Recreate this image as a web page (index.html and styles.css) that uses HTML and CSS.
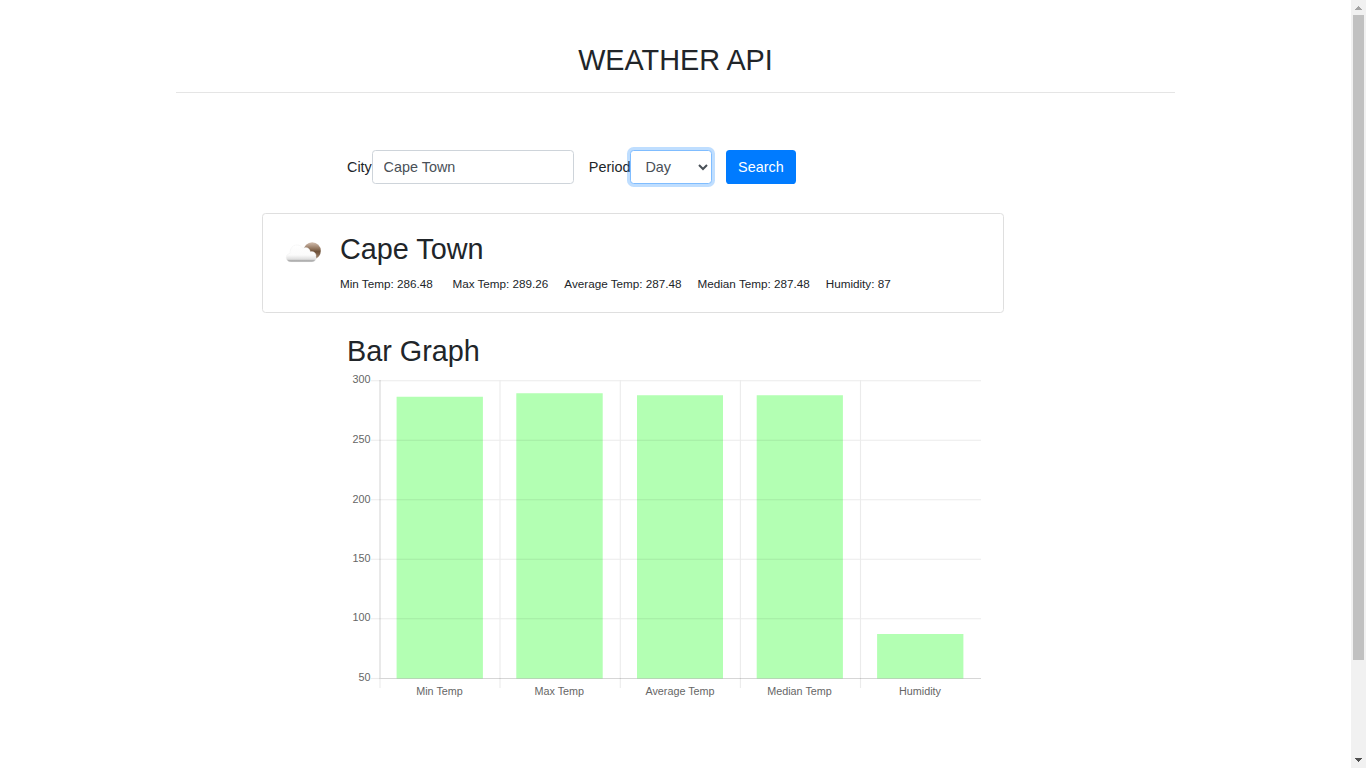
FILE: index.html
```html
<!DOCTYPE html>
<html lang="en">
<head>
<meta charset="utf-8">
<title>Weather API</title>
<link rel="stylesheet" href="styles.css">
</head>
<body>
<div class="page">
  <header class="header"><h2 class="title">WEATHER API</h2></header>
  <form class="search">
    <label for="city">City</label>
    <input id="city" class="control city" type="text" value="Cape Town">
    <label for="period">Period</label>
    <select id="period" class="control period"><option>Day</option></select>
    <button type="button" class="button">Search</button>
  </form>
  <section class="card">
    <svg class="weather" width="46" height="46" viewBox="0 0 46 46">
      <defs>
        <linearGradient id="moon" x1="0" y1="0" x2="0" y2="1"><stop offset="0" stop-color="#d3bfb0"/><stop offset=".35" stop-color="#967a63"/><stop offset=".55" stop-color="#6d5038"/><stop offset="1" stop-color="#a98e78"/></linearGradient>
        <linearGradient id="cloud" x1="0" y1="0" x2="0" y2="1"><stop offset="0" stop-color="#ffffff"/><stop offset=".6" stop-color="#fbfbfb"/><stop offset=".85" stop-color="#dedede"/><stop offset="1" stop-color="#808080"/></linearGradient>
      </defs>
      <circle cx="30.200" cy="21.800" r="8.600" fill="url(#moon)"/>
      <path d="M9 32.800C5 32.800 3.800 30 4.400 27.500C5 25.300 6.500 24.700 8 24.500C8 19 11 15.800 15 16C17.500 16 19.500 17.200 20.800 19.300C24.500 17.500 28 19.500 28.300 22.700C32 22 34.700 24.500 33.900 27.700C34.800 30.500 32.800 32.800 30 32.800Z" fill="url(#cloud)" stroke="#eeeeee" stroke-width=".4"/>
    </svg>
    <div class="details">
      <h2 class="place">Cape Town</h2>
      <div class="stats">
        <span class="first">Min Temp: 286.48</span><span>Max Temp: 289.26</span><span>Average Temp: 287.48</span><span>Median Temp: 287.48</span><span>Humidity: 87</span>
      </div>
    </div>
  </section>
  <section class="graph">
    <h2 class="graph-title">Bar Graph</h2>
    <svg class="chart" width="648" height="335" viewBox="347 370 648 335">
      <g class="bars">
        <path d="M396.600 396.800h86.300V678.500h-86.300zM516.300 393.300h86.400V678.500h-86.400zM637 395.300h86V678.500h-86zM756.700 395.300h86.200V678.500h-86.200zM877.100 634h86.300V678.500h-86.300z"/>
      </g>
      <g class="grid">
        <path d="M371 380.700H981M371 440.300H981M371 499.700H981M371 559.200H981M371 618.800H981M500 380V688M620.300 380V688M740.400 380V688M860.500 380V688M380 679V688"/>
        <path class="axis" d="M380 678.500H981M380 380V679"/>
        <path d="M371 678.500H380"/>
      </g>
      <g class="ticks">
        <text x="370.400" y="383">300</text><text x="370.400" y="443">250</text><text x="370.400" y="502.500">200</text><text x="370.400" y="562">150</text><text x="370.400" y="621">100</text><text x="370.400" y="680.600">50</text>
      </g>
      <g class="names">
        <text x="439.500" y="695">Min Temp</text><text x="559.300" y="695">Max Temp</text><text x="680" y="695">Average Temp</text><text x="799.500" y="695">Median Temp</text><text x="920" y="695">Humidity</text>
      </g>
    </svg>
  </section>
</div>
<aside class="scrollbar">
  <svg width="15" height="15" shape-rendering="crispEdges"><path d="M7 6h1v1h1v1h1v1h1v1H4V9h1V8h1V7h1z" fill="#a3a3a3"/></svg>
  <div class="thumb"></div>
  <svg width="15" height="15" shape-rendering="crispEdges"><path d="M4 5h7v1h-1v1H9v1H8v1H7V8H6V7H5V6H4z" fill="#505050"/></svg>
</aside>
</body>
</html>
```
FILE: styles.css
```css
* { box-sizing: border-box; }
body {
  margin: 0;
  height: 768px;
  overflow: hidden;
  display: flex;
  background: #fff;
  color: #212529;
  font: 14.4px/1.5 "Liberation Sans", Arial, sans-serif;
}
h2 { margin: 0; font-size: 28.8px; line-height: 34.56px; font-weight: 400; }
.page { width: 1351px; }
.header {
  width: 999px;
  height: 93px;
  margin-left: 176px;
  padding-top: 43px;
  border-bottom: 1px solid #e5e5e5;
  text-align: center;
}
.search { display: flex; align-items: center; margin: 57px 0 0 347px; height: 34px; }
.search label { padding-top: 2px; }
.control {
  height: 34px;
  border: 1px solid #ced4da;
  border-radius: 3.6px;
  background: #fff;
  color: #495057;
  font: inherit;
  outline: none;
}
.city { width: 202px; margin-right: 15px; padding: 0 10.8px; }
.period {
  width: 82px;
  margin-right: 14px;
  padding: 0 0 0 10px;
  border-color: #80bdff;
  box-shadow: 0 0 0 3px rgba(0, 123, 255, .25);
}
.button {
  width: 70px;
  height: 34px;
  padding: 2px 1px 0 0;
  border: 0;
  border-radius: 3.6px;
  background: #007bff;
  color: #fff;
  font: inherit;
}
.card {
  display: flex;
  width: 742px;
  height: 100px;
  margin: 29px 0 0 262px;
  padding: 18px 19px;
  border: 1px solid #dfdfdf;
  border-radius: 3.6px;
}
.weather { flex: none; margin-top: -3px; }
.details { margin-left: 12px; }
.stats { display: flex; gap: 16px; margin-top: 8px; font-size: 11.7px; line-height: 17px; white-space: nowrap; }
.first { margin-right: 3.7px; }
.graph { margin: 21px 0 0 347px; }
.graph-title { height: 36px; }
.chart { display: block; }
.bars { fill: #b3ffb3; }
.grid { fill: none; stroke: rgba(0, 0, 0, .08); stroke-width: 1.1; }
.axis { stroke: rgba(0, 0, 0, .16); }
.ticks, .names { fill: #666; font-size: 10.8px; }
.ticks text, .names text { transform: scale(1, 1.08); transform-box: fill-box; transform-origin: 50% 80%; }
.ticks { text-anchor: end; }
.names { text-anchor: middle; }
.scrollbar { width: 15px; height: 768px; display: flex; flex-direction: column; background: #f1f1f1; }
.scrollbar svg { display: block; flex: none; }
.thumb { width: 11px; height: 645px; margin: 0 2px auto; background: #c1c1c1; }
```
